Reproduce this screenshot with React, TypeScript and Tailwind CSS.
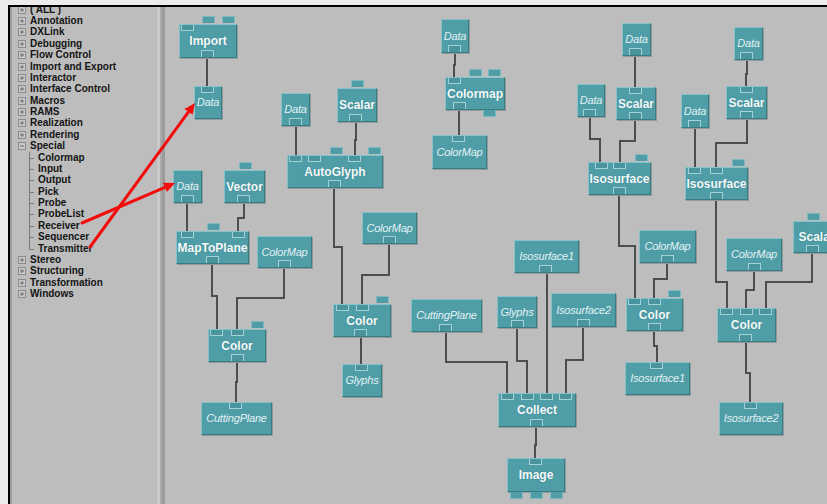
import React from 'react';

type Mod = {
  x1: number; y1: number; x2: number; y2: number;
  label: string;
  it?: boolean;
  ins?: number[];   // connected inputs, drawn inside the top edge
  tabs?: number[];  // free inputs, sticking out above
  outs?: number[];  // outputs, inside the bottom edge
  below?: number[]; // tabs sticking out below
};

// canvas origin in page pixels
const OX = 165;
const OY = 7;

const mods: Mod[] = [
  { x1: 179, y1: 24, x2: 237, y2: 58, label: 'Import', tabs: [202, 222], ins: [181], outs: [201] },
  { x1: 194, y1: 86, x2: 222, y2: 119, label: 'Data', it: true, ins: [201] },
  { x1: 281, y1: 93, x2: 310, y2: 126, label: 'Data', it: true, outs: [289] },
  { x1: 337, y1: 88, x2: 377, y2: 122, label: 'Scalar', tabs: [351], outs: [349] },
  { x1: 287, y1: 155, x2: 383, y2: 188, label: 'AutoGlyph', ins: [289, 308, 348], tabs: [330, 368], outs: [328] },
  { x1: 173, y1: 170, x2: 202, y2: 203, label: 'Data', it: true, outs: [181] },
  { x1: 224, y1: 170, x2: 265, y2: 203, label: 'Vector', tabs: [239], outs: [237] },
  { x1: 176, y1: 231, x2: 249, y2: 264, label: 'MapToPlane', ins: [181, 232], tabs: [207], outs: [206] },
  { x1: 257, y1: 236, x2: 312, y2: 268, label: 'ColorMap', it: true, outs: [278] },
  { x1: 362, y1: 212, x2: 417, y2: 244, label: 'ColorMap', it: true, outs: [383] },
  { x1: 333, y1: 304, x2: 391, y2: 337, label: 'Color', ins: [336, 356], tabs: [376], outs: [354] },
  { x1: 208, y1: 329, x2: 266, y2: 362, label: 'Color', ins: [210, 231], tabs: [251], outs: [231] },
  { x1: 201, y1: 402, x2: 272, y2: 435, label: 'CuttingPlane', it: true, ins: [229] },
  { x1: 342, y1: 364, x2: 382, y2: 397, label: 'Glyphs', it: true, ins: [355] },
  { x1: 441, y1: 19, x2: 469, y2: 53, label: 'Data', it: true, outs: [448] },
  { x1: 445, y1: 77, x2: 505, y2: 110, label: 'Colormap', ins: [448], tabs: [469, 488], outs: [453], below: [483] },
  { x1: 432, y1: 135, x2: 487, y2: 169, label: 'ColorMap', it: true, ins: [452] },
  { x1: 577, y1: 84, x2: 605, y2: 117, label: 'Data', it: true, outs: [583] },
  { x1: 622, y1: 23, x2: 651, y2: 56, label: 'Data', it: true, outs: [629] },
  { x1: 616, y1: 87, x2: 656, y2: 120, label: 'Scalar', ins: [629], outs: [629] },
  { x1: 588, y1: 162, x2: 651, y2: 195, label: 'Isosurface', ins: [595, 613], tabs: [635], outs: [613] },
  { x1: 681, y1: 94, x2: 709, y2: 128, label: 'Data', it: true, outs: [688] },
  { x1: 734, y1: 27, x2: 763, y2: 60, label: 'Data', it: true, outs: [740] },
  { x1: 726, y1: 86, x2: 767, y2: 119, label: 'Scalar', ins: [740], outs: [740] },
  { x1: 685, y1: 167, x2: 748, y2: 200, label: 'Isosurface', ins: [688, 710], tabs: [732], outs: [710] },
  { x1: 793, y1: 221, x2: 840, y2: 253, label: 'Scalar', tabs: [807], outs: [806] },
  { x1: 639, y1: 230, x2: 696, y2: 263, label: 'ColorMap', it: true, outs: [661] },
  { x1: 626, y1: 298, x2: 683, y2: 331, label: 'Color', ins: [628, 648], tabs: [668], outs: [648] },
  { x1: 625, y1: 362, x2: 690, y2: 395, label: 'Isosurface1', it: true, ins: [650] },
  { x1: 726, y1: 238, x2: 782, y2: 271, label: 'ColorMap', it: true, outs: [748] },
  { x1: 717, y1: 308, x2: 776, y2: 342, label: 'Color', ins: [720, 740, 759], outs: [739] },
  { x1: 719, y1: 402, x2: 783, y2: 435, label: 'Isosurface2', it: true, ins: [744] },
  { x1: 514, y1: 240, x2: 579, y2: 273, label: 'Isosurface1', it: true, outs: [539] },
  { x1: 411, y1: 299, x2: 482, y2: 332, label: 'CuttingPlane', it: true, outs: [439] },
  { x1: 497, y1: 296, x2: 537, y2: 328, label: 'Glyphs', it: true, outs: [511] },
  { x1: 551, y1: 293, x2: 616, y2: 327, label: 'Isosurface2', it: true, outs: [577] },
  { x1: 498, y1: 393, x2: 576, y2: 427, label: 'Collect', ins: [501, 521, 540, 559], outs: [530] },
  { x1: 507, y1: 458, x2: 565, y2: 492, label: 'Image', ins: [529], below: [510, 530, 550] },
];

const wires: number[][] = [
  [207, 58, 207, 86],
  [296, 126, 296, 155],
  [356, 122, 356, 140, 355, 140, 355, 155],
  [187, 203, 187, 231],
  [244, 203, 244, 218, 238, 218, 238, 231],
  [212, 264, 212, 296, 217, 296, 217, 329],
  [284, 268, 284, 298, 237, 298, 237, 329],
  [334, 188, 334, 247, 342, 247, 342, 304],
  [389, 244, 389, 275, 362, 275, 362, 304],
  [361, 337, 361, 364],
  [237, 362, 237, 382, 236, 382, 236, 402],
  [455, 53, 455, 65, 454, 65, 454, 77],
  [459, 110, 459, 135],
  [590, 117, 590, 139, 600, 139, 600, 162],
  [635, 56, 635, 87],
  [635, 120, 635, 141, 620, 141, 620, 162],
  [695, 128, 695, 167],
  [747, 60, 747, 74, 746, 74, 746, 86],
  [747, 119, 747, 143, 716, 143, 716, 167],
  [619, 195, 619, 246, 635, 246, 635, 298],
  [667, 263, 667, 279, 654, 279, 654, 298],
  [654, 331, 654, 346, 657, 346, 657, 362],
  [716, 200, 716, 282, 727, 282, 727, 308],
  [754, 271, 754, 290, 746, 290, 746, 308],
  [812, 253, 812, 282, 766, 282, 766, 308],
  [746, 342, 746, 373, 750, 373, 750, 402],
  [446, 332, 446, 362, 507, 362, 507, 393],
  [517, 328, 517, 361, 527, 361, 527, 393],
  [547, 273, 547, 393],
  [583, 327, 583, 360, 566, 360, 566, 393],
  [536, 427, 536, 445, 535, 445, 535, 458],
];

const tree: { label: string; kind: 'plus' | 'minus' | 'child' }[] = [
  { label: '( ALL )', kind: 'plus' },
  { label: 'Annotation', kind: 'plus' },
  { label: 'DXLink', kind: 'plus' },
  { label: 'Debugging', kind: 'plus' },
  { label: 'Flow Control', kind: 'plus' },
  { label: 'Import and Export', kind: 'plus' },
  { label: 'Interactor', kind: 'plus' },
  { label: 'Interface Control', kind: 'plus' },
  { label: 'Macros', kind: 'plus' },
  { label: 'RAMS', kind: 'plus' },
  { label: 'Realization', kind: 'plus' },
  { label: 'Rendering', kind: 'plus' },
  { label: 'Special', kind: 'minus' },
  { label: 'Colormap', kind: 'child' },
  { label: 'Input', kind: 'child' },
  { label: 'Output', kind: 'child' },
  { label: 'Pick', kind: 'child' },
  { label: 'Probe', kind: 'child' },
  { label: 'ProbeList', kind: 'child' },
  { label: 'Receiver', kind: 'child' },
  { label: 'Sequencer', kind: 'child' },
  { label: 'Transmitter', kind: 'child' },
  { label: 'Stereo', kind: 'plus' },
  { label: 'Structuring', kind: 'plus' },
  { label: 'Transformation', kind: 'plus' },
  { label: 'Windows', kind: 'plus' },
];

const Box = ({ open }: { open: boolean }) => (
  <svg width="8" height="8" viewBox="0 0 8 8" className="shrink-0">
    <rect x="0.5" y="0.5" width="7" height="7" fill="#c9c9c9" stroke="#8c8c8c" />
    <path d="M2 4h4" stroke="#6d6d6d" />
    {!open && <path d="M4 2v4" stroke="#6d6d6d" />}
  </svg>
);

const TreeRow = ({ label, kind, last }: { label: string; kind: 'plus' | 'minus' | 'child'; last: boolean }) => {
  if (kind === 'child') {
    return (
      <div className="flex items-center h-[11.375px] pl-[16px]">
        <div className="relative w-[9px] h-full shrink-0">
          <div className={`absolute left-[1px] top-0 w-px bg-[#7a7a7a] ${last ? 'h-1/2' : 'h-full'}`} />
          <div className="absolute left-[1px] top-1/2 w-[5px] h-px bg-[#7a7a7a]" />
        </div>
        <span className="pl-[1px]">{label}</span>
      </div>
    );
  }
  return (
    <div className="flex items-center h-[11.375px] pl-[6px] gap-[4px]">
      <Box open={kind === 'minus'} />
      <span>{label}</span>
    </div>
  );
};

const ModBox = ({ m }: { m: Mod }) => {
  const w = m.x2 - m.x1;
  const h = m.y2 - m.y1;
  return (
    <div className="absolute" style={{ left: m.x1 - OX, top: m.y1 - OY, width: w, height: h }}>
      <div className="w-full h-full bg-[#4f9da7] border border-t-[#88c2c9] border-l-[#88c2c9] border-r-[#3a7b84] border-b-[#3a7b84] shadow-[1px_1px_0_#8f9a9b] flex items-center justify-center">
        {m.it ? (
          <span className="italic text-[11px] text-[#e2f2f3] font-['Liberation_Sans',sans-serif] tracking-[-0.2px] leading-none">{m.label}</span>
        ) : (
          <span className="font-bold text-[12px] text-[#f4fafa] font-['Liberation_Sans',sans-serif] leading-none [text-shadow:0_0_1px_#3b7d86]">{m.label}</span>
        )}
      </div>
      {(m.tabs || []).map((x, i) => (
        <div key={'t' + i} className="absolute top-[-8px] w-[13px] h-[7px] bg-[#4f9da7] border border-[#7fb9c0] border-b-0" style={{ left: x - m.x1 }} />
      ))}
      {(m.below || []).map((x, i) => (
        <div key={'b' + i} className="absolute bottom-[-7px] w-[13px] h-[7px] bg-[#4f9da7] border border-[#7fb9c0] border-t-0" style={{ left: x - m.x1 }} />
      ))}
      {(m.ins || []).map((x, i) => (
        <div key={'i' + i} className="absolute top-[1px] w-[13px] h-[6px] bg-[#4a949e] border border-t-0 border-[#a3d1d6]" style={{ left: x - m.x1 }} />
      ))}
      {(m.outs || []).map((x, i) => (
        <div key={'o' + i} className="absolute bottom-[1px] w-[13px] h-[7px] bg-[#4a949e] border border-b-0 border-[#a3d1d6]" style={{ left: x - m.x1 }} />
      ))}
    </div>
  );
};

const Arrow = ({ x1, y1, x2, y2 }: { x1: number; y1: number; x2: number; y2: number }) => {
  const a = Math.atan2(y2 - y1, x2 - x1);
  const L = 11;
  const W = 5;
  const bx = x2 - L * Math.cos(a);
  const by = y2 - L * Math.sin(a);
  const px = -Math.sin(a) * W;
  const py = Math.cos(a) * W;
  return (
    <g>
      <line x1={x1} y1={y1} x2={bx} y2={by} stroke="#f20d0d" strokeWidth={3} strokeLinecap="round" />
      <polygon points={`${x2},${y2} ${bx + px},${by + py} ${bx - px},${by - py}`} fill="#f20d0d" />
    </g>
  );
};

export default function App() {
  return (
    <div className="relative w-[827px] h-[504px] overflow-hidden bg-[#ececec] pt-[5px] pl-[8px] font-['Liberation_Sans',Arial,sans-serif]">
      <div className="flex h-full border-t-2 border-l-2 border-black">
        {/* palette tree */}
        <div className="w-[147px] h-full bg-[#bdbdbd] border-l-[2px] border-[#9d9d9d] overflow-hidden">
          <div className="mt-[-3px] text-[10px] font-bold text-[#141414] leading-none">
            {tree.map((r, i) => (
              <TreeRow key={i} label={r.label} kind={r.kind} last={r.label === 'Transmitter'} />
            ))}
          </div>
        </div>
        {/* splitter */}
        <div className="flex h-full">
          <div className="w-[3px] bg-[#c9c9c9]" />
          <div className="w-[2px] bg-[#a9a9a9]" />
          <div className="w-[3px] bg-[#9b9b9b]" />
        </div>
        {/* network canvas */}
        <div className="relative flex-1 h-full bg-[#bdbdbd]">
          <svg className="absolute left-0 top-0" width={700} height={500}>
            <g transform={`translate(${-OX},${-OY})`}>
              {wires.map((p, i) => {
                const pts: string[] = [];
                for (let k = 0; k < p.length; k += 2) pts.push(`${p[k]},${p[k + 1]}`);
                return <polyline key={i} points={pts.join(' ')} fill="none" stroke="#4d4d4d" strokeWidth={2} />;
              })}
            </g>
          </svg>
          {mods.map((m, i) => (
            <ModBox key={i} m={m} />
          ))}
        </div>
      </div>
      {/* annotation arrows */}
      <svg className="absolute left-0 top-0 pointer-events-none" width={827} height={504}>
        <Arrow x1={90} y1={247} x2={195} y2={103} />
        <Arrow x1={82} y1={223} x2={175} y2={183} />
      </svg>
    </div>
  );
}
